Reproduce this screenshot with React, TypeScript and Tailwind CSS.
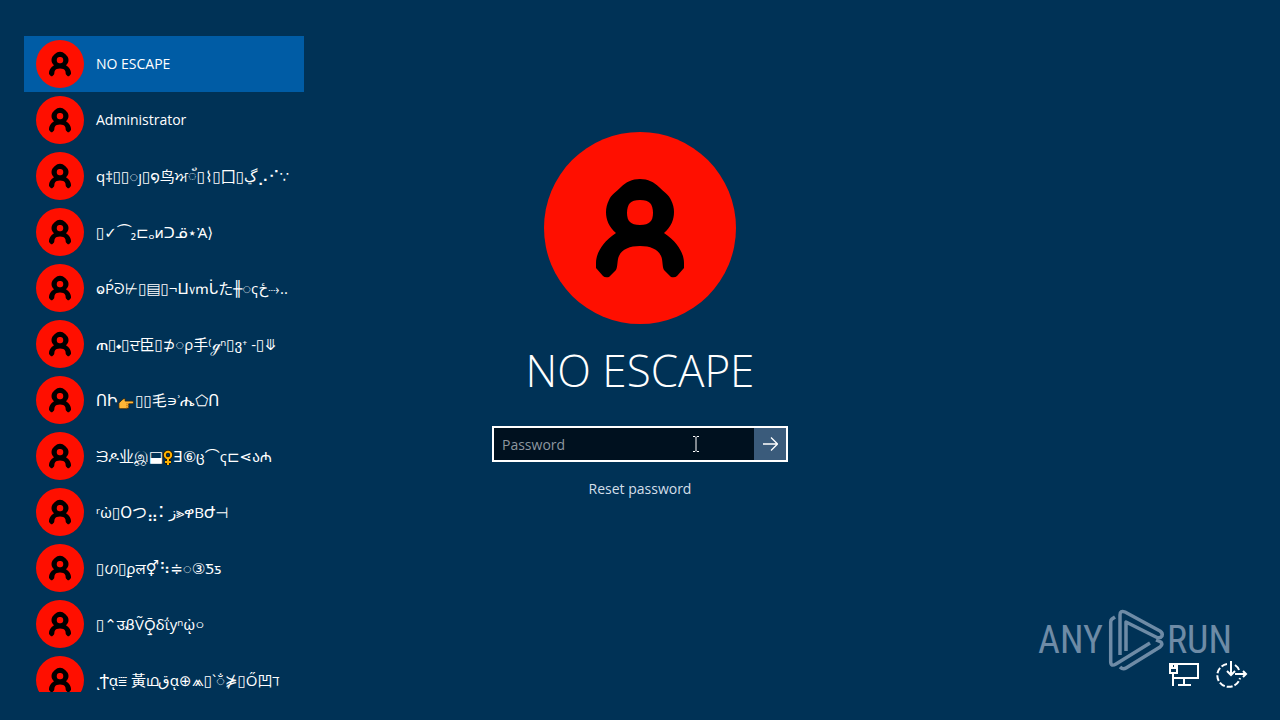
import React from "react"

function Avatar({ className }: { className: string }) {
  return (
    <svg viewBox="0 0 192 192" className={className} aria-hidden="true">
      <circle cx="96" cy="96" r="96" fill="#ff0f00" />
      <path
        fill="#000"
        fillRule="evenodd"
        d="M96 47C104 47 110 50 115 55C120 60 125 63 127 68C129 72 130 76 130 80C130 88 127 95 120 101C134 110 140 122 140 131V136L133 144Q131 146 127 145L120 138C118 134 119 128 117 124C114 117 106 114 96 114C86 114 78 117 75 124C73 128 74 134 72 138L65 145Q61 146 59 144L52 136V131C52 122 58 110 72 101C65 95 62 88 62 80C62 76 63 72 65 68C67 63 72 60 77 55C82 50 88 47 96 47ZM96 68C91 68 88 69 86 71C82 75 82 87 86 90C88 92 91 93 96 93C101 93 104 92 106 90C110 87 110 75 106 71C104 69 101 68 96 68Z"
      />
    </svg>
  )
}

function PointingHand() {
  return (
    <svg viewBox="0 0 18 16" className="mx-px inline-block h-4 w-4" aria-hidden="true">
      <path
        d="M1 9C3 8 5 4 8 4L8 7H16Q17.500 7 17.500 8.500Q17.500 10 16 10H12V14Q12 15.500 10 15.500H3L1 15Z"
        fill="#ffb636"
        stroke="#2b1d0a"
        strokeWidth="0.8"
      />
      <path d="M9 10H12M9 12H12M9 14H12" stroke="#c77b17" strokeWidth="0.8" />
    </svg>
  )
}

function FemaleSign() {
  return (
    <svg viewBox="0 0 10 16" className="inline-block h-4 w-2.5" aria-hidden="true">
      <path d="M5 8V15M2 12H8" stroke="#241900" strokeWidth="4" />
      <circle cx="5" cy="5" r="3.200" fill="none" stroke="#241900" strokeWidth="3.500" />
      <circle cx="5" cy="5" r="3.200" fill="none" stroke="#ffb100" strokeWidth="2" />
      <path d="M5 8V15M2 12H8" stroke="#ffb100" strokeWidth="2" />
    </svg>
  )
}

const accounts = ["NO ESCAPE", "Administrator"]

const scrambled: React.ReactNode[] = [
  "q‡▯▯◌ȷ▯໑鸟ਅ័▯⌇▯囗▯ڲ⡠⠊∵",
  "▯✓⏜₂⊏ₒᴎᑐᓆ⋆Ἀ⟩",
  <>ⱺṔᘐ⊬▯▤▯¬ⵡ᥎ՠᒑた╫◌ҁځ⤑..</>,
  "ጠ▯⬩▯ਦ臣▯⊅◌ρ手⁽ℊⁿ▯ვ⁺ -▯⤋",
  <>ՈԻ<PointingHand />▯▯毛∍ʾሔ⬠Ո</>,
  <>ᙐዶ业இ⬓<FemaleSign />ⴺ⑥ც⌒ҁ⊏⋖ა₼</>,
  "ʳὠ▯Օつ⣤⠅ز⪢ዋΒԺ⊣",
  "▯ഗ▯ϼल⚥⠳≑◌③Ƽƽ",
  "▯⌃उᏰṼǬ̱ẟΐyⁿᾠ০",
  "ͺϮᾳ⩸ 黃ഥقᾳ⊕⩕▯`◌̐⋡▯Ő凹ℸ",
]

function UserRow({ name, selected, className }: { name: React.ReactNode; selected?: boolean; className: string }) {
  return (
    <li>
      <button
        className={
          selected
            ? "flex h-14 w-full items-center gap-3 bg-[#005ca5] px-3 text-left"
            : "flex h-14 w-full items-center gap-3 px-3 text-left"
        }
      >
        <Avatar className="h-12 w-12 shrink-0" />
        <span className={className}>{name}</span>
      </button>
    </li>
  )
}

function UserList() {
  return (
    <nav aria-label="Users" className="h-full w-70 overflow-hidden">
      <ul>
        {accounts.map((name, i) => (
          <UserRow key={name} name={name} selected={i === 0} className="leading-6" />
        ))}
        {scrambled.map((name, i) => (
          <UserRow key={i} name={name} className="h-6 text-[15px] leading-6 whitespace-nowrap" />
        ))}
      </ul>
    </nav>
  )
}

function LoginForm() {
  return (
    <main className="flex flex-col items-center pt-24">
      <Avatar className="h-48 w-48" />
      <h1 className="mt-4 text-[44px] leading-[60px] font-light whitespace-nowrap">NO ESCAPE</h1>
      <form className="mt-[26px] flex h-9 w-74 border-2 border-white bg-[#00111f]" onSubmit={(e) => e.preventDefault()}>
        <div className="relative flex-1">
          <input
            type="password"
            aria-label="Password"
            placeholder="Password"
            className="h-full w-full bg-transparent px-2 outline-none placeholder:text-[#8d979f]"
          />
          <svg
            viewBox="0 0 8 16"
            className="absolute top-2 right-[54px] h-4 w-2"
            fill="none"
            stroke="#fff"
            aria-hidden="true"
          >
            <path d="M1 .5H3L4 1.500L5 .5H7M4 1.500V14.500M1 15.500H3L4 14.500L5 15.500H7" />
          </svg>
        </div>
        <button aria-label="Submit" className="flex w-8 items-center justify-center bg-[#3a5b7b]">
          <svg viewBox="0 0 16 16" className="h-4 w-4" fill="none" stroke="#fff" strokeWidth="1.300" aria-hidden="true">
            <path d="M1 8H15.500M9 1.500L15.500 8L9 14.500" />
          </svg>
        </button>
      </form>
      <a href="#reset" className="mt-[15px] leading-6 text-[#d3dfe9]">
        Reset password
      </a>
    </main>
  )
}

function Watermark() {
  return (
    <div className="absolute right-12 bottom-12 flex items-center font-['Liberation_Sans_Narrow','Roboto_Condensed',Roboto,sans-serif] text-[38px] text-[#6e8ba6]">
      <span>ANY</span>
      <svg
        viewBox="0 0 60 64"
        className="ml-1 h-16 w-15"
        fill="none"
        stroke="currentColor"
        strokeWidth="3.500"
        strokeLinejoin="round"
        aria-hidden="true"
      >
        <path d="M8 9L5 11Q3.700 12 3.700 14V54Q4 59 9 56L43 35" />
        <path d="M13 47V7Q13 2 18 4L53 23Q56 25 55 28Q53 31 49 29L19 14V43" />
        <path d="M49 32L54 34Q56 37 53 39L19 60Q16 62 13 59" />
      </svg>
      <span>RUN</span>
    </div>
  )
}

function SystemButtons() {
  return (
    <div className="relative flex gap-4 pb-1">
      <button aria-label="Network">
        <svg viewBox="0 0 32 28" className="h-7 w-8" fill="none" stroke="#fff" strokeWidth="2" aria-hidden="true">
          <path d="M9 4H30V18H5M5 13V26M16 18V24M10 25H23" />
          <path d="M2 4H9V13H2ZM4 5V8H7V5" />
        </svg>
      </button>
      <button aria-label="Power">
        <svg viewBox="0 0 32 28" className="h-7 w-8" fill="none" stroke="#fff" strokeWidth="2" aria-hidden="true">
          <path d="M11 4A11.500 11.500 0 1 0 24 18" strokeDasharray="6 2" />
          <path d="M19 5Q22 7 23 10M15 1V14M11 11L15 15L19 11M19 14H30M27 11L30 14L27 17" />
        </svg>
      </button>
    </div>
  )
}

export default function App() {
  return (
    <div className="grid h-screen min-h-120 grid-cols-[304px_1fr_304px] overflow-hidden bg-[#003256] pt-9 pb-7 font-['Open_Sans','Noto_Sans','DejaVu_Sans','Noto_Sans_CJK_SC',sans-serif] text-sm text-white">
      <aside className="min-h-0 pl-6">
        <UserList />
      </aside>
      <LoginForm />
      <footer className="relative flex items-end justify-end pr-8">
        <div className="absolute inset-0 -bottom-7">
          <Watermark />
        </div>
        <SystemButtons />
      </footer>
    </div>
  )
}
